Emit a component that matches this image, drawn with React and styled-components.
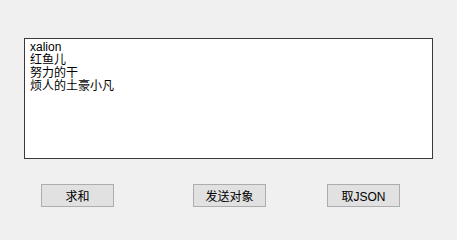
import React from "react";
import styled, { createGlobalStyle } from "styled-components";

const Global = createGlobalStyle`
  html, body { margin: 0; padding: 0; background: #f0f0f0; }
  body { width: 457px; height: 237px; overflow: hidden; }
`;

const Form = styled.div`
  width: 457px;
  height: 237px;
  background: #f0f0f0;
  display: flex;
  flex-direction: column;
  padding: 38px 0 0 24px;
  box-sizing: border-box;
  font-family: "Liberation Sans", "Noto Sans CJK SC", sans-serif;
`;

const TextBox = styled.div`
  width: 409px;
  height: 121px;
  box-sizing: border-box;
  border: 1px solid #3a3a3a;
  background: #ffffff;
  padding: 2px 0 0 5px;
  font-size: 12px;
  line-height: 13px;
  color: #000;
  display: flex;
  flex-direction: column;
`;

const Line = styled.div`
  white-space: nowrap;
`;

const ButtonRow = styled.div`
  display: flex;
  margin-top: 25px;
  padding-left: 17px;
`;

const Button = styled.button`
  width: 73px;
  height: 23px;
  margin-left: ${(p) => p.$offset || 0}px;
  box-sizing: border-box;
  border: 1px solid #adadad;
  background: #e1e1e1;
  color: #000;
  font-family: "Liberation Sans", "Noto Sans CJK SC", sans-serif;
  font-size: 12px;
  padding: 0;
  display: flex;
  align-items: center;
  justify-content: center;
`;

const lines = ["xalion", "红鱼儿", "努力的干", "烦人的土豪小凡"];

export default function App() {
  return (
    <>
      <Global />
      <Form>
        <TextBox>
          {lines.map((l) => (
            <Line key={l}>{l}</Line>
          ))}
        </TextBox>
        <ButtonRow>
          <Button>求和</Button>
          <Button $offset={79}>发送对象</Button>
          <Button $offset={61}>取JSON</Button>
        </ButtonRow>
      </Form>
    </>
  );
}
